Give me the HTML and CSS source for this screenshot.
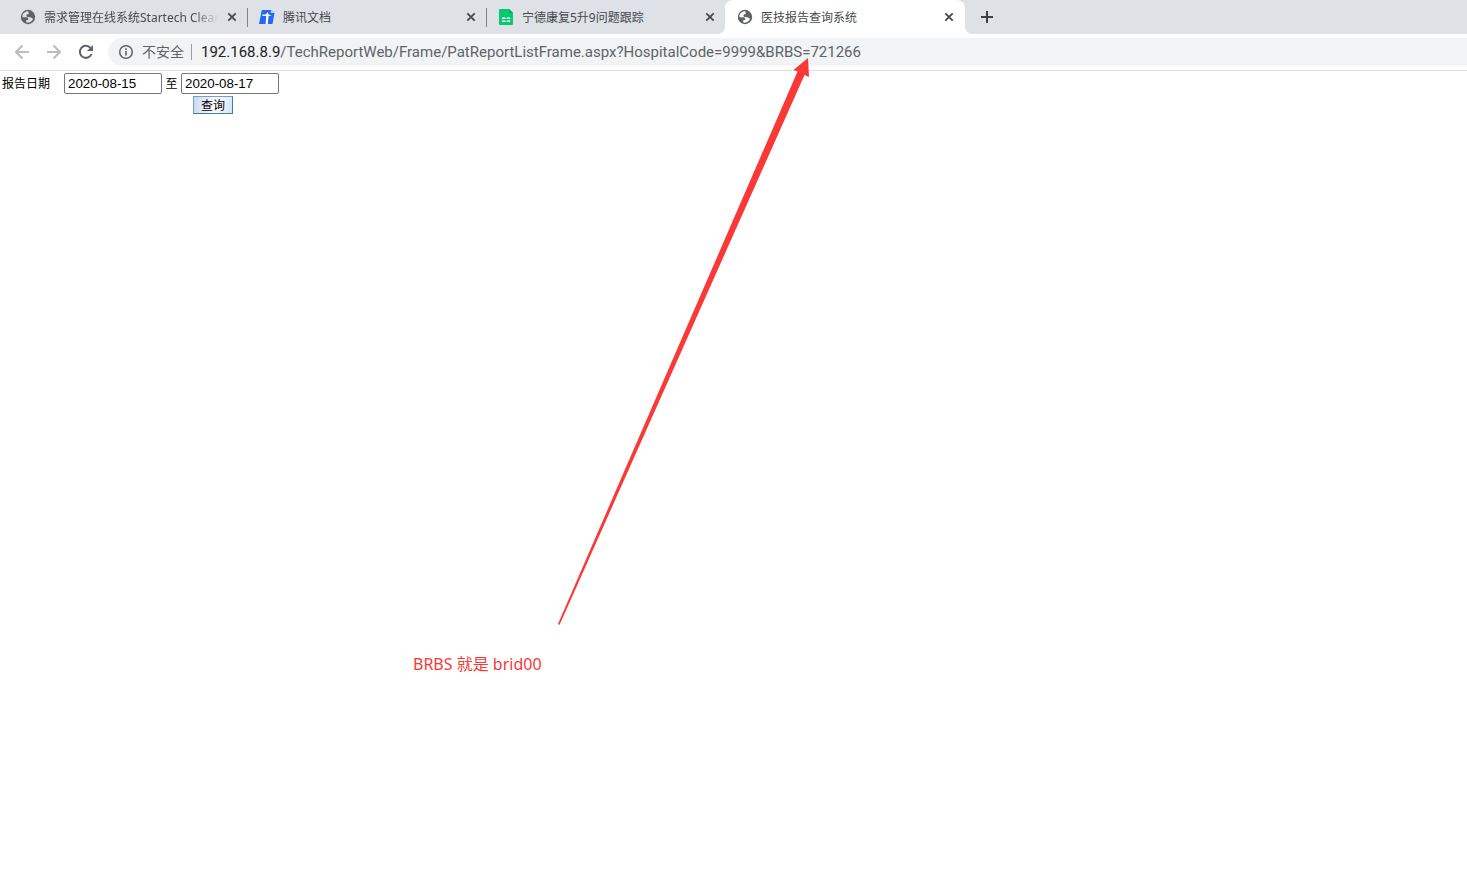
FILE: index.html
```html
<!DOCTYPE html>
<html lang="zh-CN">
<head>
<meta charset="utf-8">
<title>医技报告查询系统</title>
<link rel="stylesheet" href="styles.css">
</head>
<body>
<svg class="defs" aria-hidden="true">
  <symbol id="globe" viewBox="0 0 16 16">
    <circle cx="8" cy="8" r="7.2" fill="#5f6368"/>
    <path d="M8.400 2.200C6 2 3.700 3.200 2.700 5.600C2.300 7 2.400 7.800 2.700 8.300H6.300C7.600 8.300 8.200 9 8.200 9.900V11H6.300V13.500C9.500 14.200 12.400 12.300 13.300 9.600C11.700 9.700 11.500 8.500 10.300 8.200L7.600 7.900C6.200 7.500 6 5.700 7.200 5.200H8.600V3.800Z" fill="currentColor"/>
  </symbol>
  <symbol id="cross" viewBox="0 0 10 10">
    <path d="M1.300 1.300L8.700 8.700M8.700 1.300L1.300 8.700" stroke="#45494d" stroke-width="1.800" fill="none"/>
  </symbol>
</svg>
<header class="browser">
  <div class="tabs" role="tablist">
    <div class="tab">
      <svg class="favicon"><use href="#globe"/></svg>
      <span class="title fade">需求管理在线系统Startech Clear</span>
      <button class="close" aria-label="关闭"><svg><use href="#cross"/></svg></button>
    </div>
    <div class="tab">
      <svg class="favicon" viewBox="0 0 16 16"><path d="M2.800 1H12L15.500 4L13.500 15H0Z" fill="#2468f2"/><path d="M12 1L15.500 4H11.500Z" fill="#8fe3ff"/><path d="M3.500 5.500H7L8.300 3L9.800 5.500L13 6.800H9.600L8.800 15H6.600L7.200 7H3.500Z" fill="#fff"/></svg>
      <span class="title">腾讯文档</span>
      <button class="close" aria-label="关闭"><svg><use href="#cross"/></svg></button>
    </div>
    <div class="tab last">
      <svg class="favicon" viewBox="0 0 16 16"><path d="M1 1Q1 0 2 0H11L15 4V15Q15 16 14 16H2Q1 16 1 15Z" fill="#07c972"/><path d="M11 0L15 4H11Z" fill="#04a85c"/><path d="M4 9.300h3.500M8.700 9.300h3.500M4 12.200h3.500M8.700 12.200h3.500" stroke="#fff" stroke-width="1.500"/></svg>
      <span class="title">宁德康复5升9问题跟踪</span>
      <button class="close" aria-label="关闭"><svg><use href="#cross"/></svg></button>
    </div>
    <div class="tab active">
      <svg class="favicon"><use href="#globe"/></svg>
      <span class="title">医技报告查询系统</span>
      <button class="close" aria-label="关闭"><svg><use href="#cross"/></svg></button>
    </div>
    <button class="new" aria-label="新标签页"><svg viewBox="0 0 12 12"><path d="M6 0V12M0 6H12" stroke="#3c4043" stroke-width="2"/></svg></button>
  </div>
  <nav class="toolbar">
    <button aria-label="后退"><svg viewBox="0 0 16 16"><path d="M15 8H2M8.500 1.500L2 8L8.500 14.500" stroke="#babcbe" stroke-width="2" fill="none"/></svg></button>
    <button aria-label="前进"><svg viewBox="0 0 16 16"><path d="M1 8H14M7.500 1.500L14 8L7.500 14.500" stroke="#babcbe" stroke-width="2" fill="none"/></svg></button>
    <button aria-label="刷新"><svg viewBox="0 0 16 16"><path d="M13.500 10A6 6 0 1 1 12.500 4" stroke="#5f6368" stroke-width="2" fill="none"/><path d="M15 1V7H9Z" fill="#5f6368"/></svg></button>
    <div class="address">
      <svg class="info" viewBox="0 0 16 16"><circle cx="8" cy="8" r="6.300" stroke="#5f6368" stroke-width="1.500" fill="none"/><path d="M8 7V11.500M8 4.300V5.900" stroke="#5f6368" stroke-width="1.600"/></svg>
      <span class="unsafe">不安全</span>
      <span class="url"><b>192.168.8.9</b>/TechReportWeb/Frame/PatReportListFrame.aspx?HospitalCode=9999&amp;BRBS=721266</span>
    </div>
  </nav>
</header>
<main>
  <form class="query">
    <label for="from">报告日期</label>
    <input id="from" type="text" value="2020-08-15">
    <label class="to" for="until">至</label>
    <input id="until" type="text" value="2020-08-17">
    <button class="search" type="button">查询</button>
  </form>
</main>
<svg class="arrow" viewBox="0 0 252 568" aria-hidden="true"><path d="M0 566L239.500 13.500L235.500 12L250 0L251 19L246.500 17L1.500 567Z" fill="#fb3838"/></svg>
<p class="note">BRBS 就是 brid00</p>
</body>
</html>
```
FILE: styles.css
```css
* { box-sizing: border-box; }
body {
  margin: 0;
  background: #fff;
  color: #000;
  font: 12px/16px "Noto Sans", "Noto Sans CJK SC", sans-serif;
}
.defs { position: absolute; width: 0; height: 0; }
button { padding: 0; border: 0; background: none; }
svg { display: block; flex: none; }

.tabs {
  display: flex;
  height: 34px;
  padding-left: 8px;
  background: #dee1e6;
}
.tab {
  position: relative;
  display: flex;
  align-items: center;
  flex: 0 1 239px;
  min-width: 0;
  padding: 0 10px 0 12px;
  color: #45494d;
}
.tab::after {
  content: "";
  position: absolute;
  right: -1px;
  top: 8px;
  width: 1px;
  height: 19px;
  background: #808387;
}
.tab.last::after { display: none; }
.tab.active {
  flex-basis: 240px;
  padding-right: 11px;
  background: #fff;
  border-radius: 8px 8px 0 0;
}
.tab.active::before, .tab.active::after {
  content: "";
  position: absolute;
  display: block;
  top: auto;
  bottom: 0;
  width: 8px;
  height: 8px;
}
.tab.active::before { left: -8px; background: radial-gradient(circle at 0 0, #dee1e6 8px, #fff 8px); }
.tab.active::after { right: -8px; background: radial-gradient(circle at 100% 0, #dee1e6 8px, #fff 8px); }
.favicon { width: 16px; height: 16px; color: #dee1e6; }
.active .favicon { color: #fff; }
.title {
  flex: 1;
  min-width: 0;
  margin: 0 8px;
  padding-top: 2px;
  overflow: hidden;
  white-space: nowrap;
}
.fade {
  -webkit-mask-image: linear-gradient(to right, #000 85%, transparent);
  mask-image: linear-gradient(to right, #000 85%, transparent);
}
.close svg { width: 10px; height: 10px; }
.new { margin-left: 16px; }
.new svg { width: 12px; height: 12px; }

.toolbar {
  display: flex;
  align-items: center;
  gap: 16px;
  height: 37px;
  padding-left: 14px;
  border-bottom: 1px solid #dadce0;
}
.toolbar svg { width: 16px; height: 16px; }
.address {
  display: flex;
  align-items: center;
  flex: 1;
  min-width: 0;
  height: 28px;
  margin-left: -2px;
  padding-left: 10px;
  border-radius: 14px 0 0 14px;
  background: #f1f3f4;
  color: #5f6368;
  font-size: 14px;
  white-space: nowrap;
}
.unsafe {
  margin-left: 8px;
  padding-right: 7px;
  border-right: 1px solid #9a9da1;
}
.url {
  margin-left: 9px;
  font-family: Roboto, sans-serif;
  font-size: 15px;
}
.url b { font-weight: 400; color: #202124; }

.query {
  display: grid;
  grid-template-columns: 62px 98px 19px 98px;
  align-items: center;
  row-gap: 2px;
  padding: 2px;
}
.query .to { text-align: center; }
.query input {
  width: 98px;
  height: 21px;
  padding: 1px 3px;
  border: 1px solid #767676;
  border-radius: 2px;
  font-family: "Liberation Sans", Arial, sans-serif;
}
.search {
  grid-column: 4;
  width: 40px;
  height: 18px;
  margin-left: 12px;
  border: 1px solid #7b9ebd;
  border-right-color: #3f8390;
  border-bottom-color: #3f8390;
  background: linear-gradient(100deg, #c6d7f3, #fff 55%, #d5e2f7);
  font: 12px/16px "Noto Sans CJK SC", sans-serif;
}

.arrow {
  position: absolute;
  left: 558px;
  top: 58px;
  width: 252px;
  height: 568px;
}
.note {
  position: absolute;
  left: 413px;
  top: 652px;
  margin: 0;
  color: #fb3838;
  font-size: 16px;
  line-height: 24px;
  white-space: nowrap;
}
```
